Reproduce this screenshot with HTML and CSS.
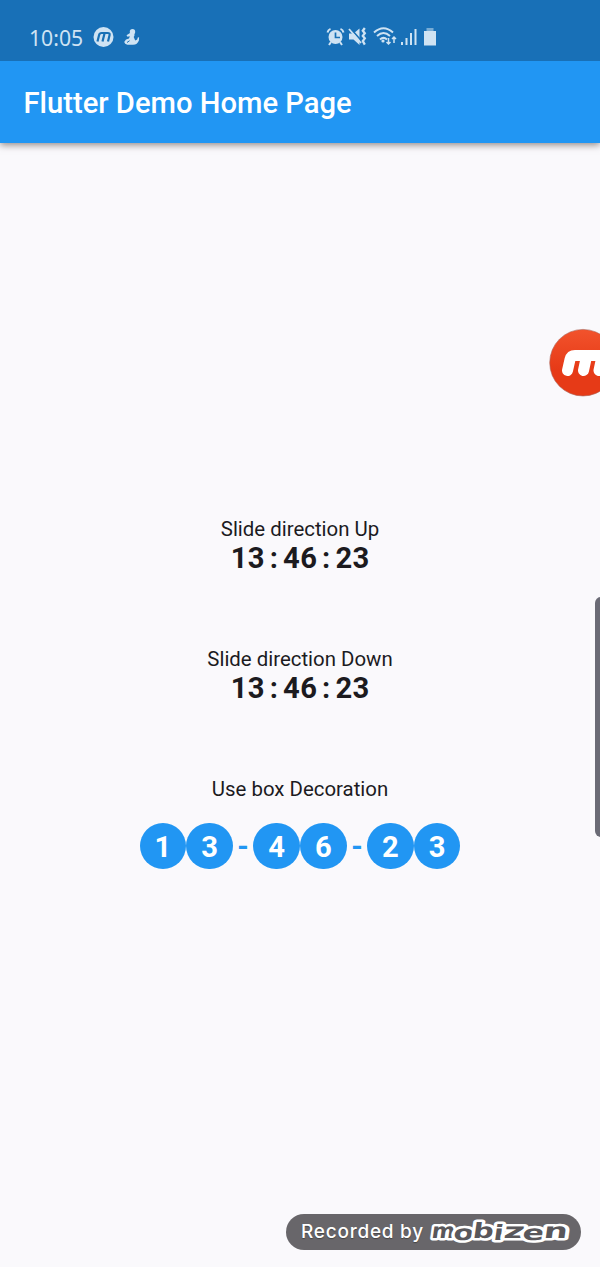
FILE: index.html
```
<!DOCTYPE html>
<html lang="en">
<head>
<meta charset="utf-8">
<title>Flutter Demo Home Page</title>
<link rel="stylesheet" href="styles.css">
</head>
<body>
<div class="screen">
  <div class="status">
    <span class="clock">10:05</span>
    <svg class="notifications" width="50" height="24" viewBox="92 25 50 24">
      <circle cx="103.500" cy="37" r="10" fill="#cfe3f3"/>
      <path d="M97.500 41.500l1.600-6.500q.5-2 2.500-2h6q2.500 0 2 2l-1.600 6.500M102.500 41.500l2-8" fill="none" stroke="#1870b5" stroke-width="2.200"/>
      <circle cx="132.500" cy="31.700" r="2.700" fill="#cfe3f3"/>
      <path d="M126.500 35.200l3.500-2.200h4.300l.2 2.500-.8 1.500 1.500 3.500 2-1 .6-2 1.300-.3-.2 3.300q-1.600 4.300-6 4.200h-5.500q-2.800-.4-3.200-2.600l1.800-2.700 3-.9.800-2.200-2.300.4z" fill="#cfe3f3"/>
      <path d="M127 42.500l2.600-1.800" stroke="#1870b5" stroke-width="1"/>
    </svg>
    <svg class="system" width="114" height="24" viewBox="325 25 114 24" fill="none" stroke="#cfe3f3">
      <circle cx="335.500" cy="37" r="7" fill="#cfe3f3" stroke="none"/>
      <path d="M327.500 32.500q.5-2.700 3-3.600M343.500 32.500q-.5-2.700-3-3.600M331 42l-2 3M340 42l2 3" stroke-width="2"/>
      <path d="M335.500 32.500v5h4.500" stroke="#1870b5" stroke-width="1.700"/>
      <path d="M349 33.500h4.500l6-5v16.500l-6-5.500H349z" fill="#cfe3f3" stroke="none"/>
      <path d="M350.500 28.500L362 41.500" stroke="#1870b5" stroke-width="1.800"/>
      <path d="M349 29L361 43" stroke-width="1.800"/>
      <path d="M364.800 28l-2 2.700 2 2.500-2 2.700 2 2.500-2 2.700 2 3.500" stroke-width="2.300"/>
      <path d="M374 32.500q9.500-8.500 19 0M377 36q6.500-6 13 0M380 39.500q3.500-3.300 7 0" stroke-width="2"/>
      <circle cx="383" cy="41" r="1.600" fill="#cfe3f3" stroke="none"/>
      <path d="M388.500 38v6M386.500 42l2 2 2-2M394 43v-6M392 39l2-2 2 2" stroke-width="1.500"/>
      <path d="M402 45v-3M406.500 45v-7M411 45V33M415.500 45V29" stroke-width="2"/>
      <path d="M426.500 28h7v3h-7z" fill="#78acd5" stroke="none"/>
      <path d="M424 31h12v14.500h-12z" fill="#cfe3f3" stroke="none"/>
    </svg>
  </div>
  <header class="appbar">Flutter Demo Home Page</header>
  <main class="content">
    <section class="block">
      <div class="label">Slide direction Up</div>
      <div class="time"><b>1</b><b>3</b><i>:</i><b>4</b><b>6</b><i>:</i><b>2</b><b>3</b></div>
    </section>
    <section class="block">
      <div class="label">Slide direction Down</div>
      <div class="time"><b>1</b><b>3</b><i>:</i><b>4</b><b>6</b><i>:</i><b>2</b><b>3</b></div>
    </section>
    <section class="block">
      <div class="label">Use box Decoration</div>
      <div class="time circles"><b>1</b><b>3</b><i>-</i><b>4</b><b>6</b><i>-</i><b>2</b><b>3</b></div>
    </section>
  </main>
  <svg class="recorder" width="52" height="70" viewBox="548 328 52 70">
    <defs><linearGradient id="red" x2="0" y2="1"><stop offset="0" stop-color="#f2532c"/><stop offset=".6" stop-color="#e63a17"/></linearGradient></defs>
    <circle cx="583" cy="362.700" r="33.300" fill="url(#red)" stroke="#a96559" stroke-width=".6"/>
    <path d="M567.500 370.500l2.500-11q1-4 5-4h30M583.500 370.500l3-14M599 370.500l3-14" fill="none" stroke="#fff" stroke-width="11" stroke-linecap="round" stroke-linejoin="round"/>
  </svg>
  <div class="edge"></div>
  <div class="watermark">
    <span class="credit">Recorded by</span>
    <svg class="wordmark" width="144" height="32" viewBox="428 1216 144 32">
      <g transform="translate(-1 1237.500) skewX(-8)">
        <g class="letters">
          <text x="432" y="0" textLength="23" lengthAdjust="spacingAndGlyphs">m</text>
          <text x="454" y="2.500" textLength="20" lengthAdjust="spacingAndGlyphs">o</text>
          <text x="473" y="0" textLength="21" lengthAdjust="spacingAndGlyphs">b</text>
          <text x="494" y="2.500" textLength="10" lengthAdjust="spacingAndGlyphs">i</text>
          <text x="504" y="0" textLength="21" lengthAdjust="spacingAndGlyphs">z</text>
          <text x="523" y="2.500" textLength="22" lengthAdjust="spacingAndGlyphs">e</text>
          <text x="544" y="0" textLength="24" lengthAdjust="spacingAndGlyphs">n</text>
        </g>
      </g>
    </svg>
  </div>
</div>
</body>
</html>
```
FILE: styles.css
```
body { margin: 0; font-family: Roboto, sans-serif; }
.screen {
  position: relative;
  width: 600px;
  height: 1267px;
  overflow: hidden;
  display: flex;
  flex-direction: column;
  background: #faf9fc;
  color: #1c1b1f;
}
.status {
  position: relative;
  z-index: 1;
  flex: none;
  height: 61px;
  box-sizing: border-box;
  padding: 25px 0 0 29px;
  display: flex;
  background: #1870b7;
}
.clock {
  width: 63px;
  font: 21.200px/25px "Noto Sans", sans-serif;
  color: #cfe3f3;
}
.system { margin-left: 183px; }
.appbar {
  flex: none;
  height: 81.500px;
  box-sizing: border-box;
  padding-left: 23.500px;
  font-size: 29.180px;
  font-weight: 500;
  line-height: 84px;
  color: #fff;
  background: #2196f3;
  box-shadow: 0 2px 7px rgba(60, 45, 40, .55);
}
.content {
  display: flex;
  flex-direction: column;
  align-items: center;
  gap: 71px;
  padding-top: 374px;
}
.block { display: flex; flex-direction: column; align-items: center; }
.label { font-size: 20.420px; line-height: 24px; }
.time {
  display: flex;
  font-size: 29.180px;
  line-height: 35px;
  font-weight: 700;
}
.time b { width: 17.200px; text-align: center; font-weight: 700; }
.time i { width: 18px; text-align: center; font-style: normal; }
.circles { margin-top: 22px; color: #2196f3; }
.circles b {
  width: 46.700px;
  height: 46.700px;
  line-height: 48px;
  border-radius: 50%;
  background: #2196f3;
  color: #fff;
}
.circles i { width: 20.400px; line-height: 47px; }
.recorder { position: absolute; right: 0; top: 328px; }
.edge {
  position: absolute;
  right: -8px;
  top: 597px;
  width: 13.500px;
  height: 240px;
  border-radius: 6px;
  background: #6b6b76;
}
.watermark {
  position: absolute;
  left: 286px;
  top: 1214px;
  width: 295px;
  height: 36px;
  box-sizing: border-box;
  padding-left: 15px;
  display: flex;
  align-items: center;
  border-radius: 18px;
  background: #68666a;
}
.credit {
  width: 127px;
  font: 500 19px/36px Inter, sans-serif;
  letter-spacing: .75px;
  white-space: nowrap;
  color: #fff;
  text-shadow: 0 1px 1px #444;
}
.letters {
  font: 700 21px "DejaVu Sans", sans-serif;
  fill: #59575b;
  stroke: #fff;
  stroke-width: 5px;
  stroke-linejoin: round;
  paint-order: stroke;
}
```
